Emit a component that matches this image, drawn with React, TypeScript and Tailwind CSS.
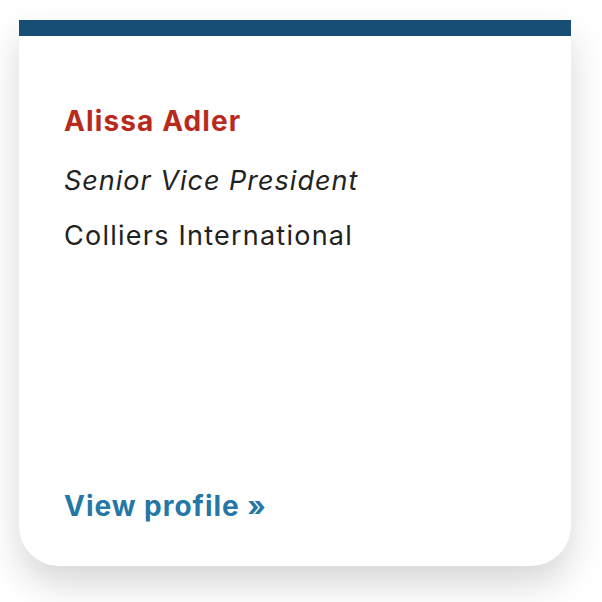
export default function App() {
  return (
    <div className="min-h-[602px] w-[602px] bg-white pl-[19px] pt-[20px] font-['Inter',sans-serif]">
      <div className="flex h-[546px] w-[552px] flex-col overflow-hidden rounded-b-[40px] border-t-[16px] border-[#174e75] bg-white shadow-[0_18px_36px_rgba(0,0,0,0.16)]">
        <div className="flex flex-1 flex-col px-[45px] pt-[67px] pb-[42px]">
          <h2 className="text-[28px] font-bold leading-[36px] tracking-[0.04em] text-[#b82a1e]">Alissa Adler</h2>
          <p className="mt-[24px] text-[27px] italic leading-[36px] tracking-[0.037em] text-[#222]">
            Senior Vice President
          </p>
          <p className="mt-[19px] text-[27px] leading-[36px] tracking-[0.046em] text-[#222]">Colliers International</p>
          <a href="#" className="mt-auto text-[28px] font-bold leading-[36px] tracking-[0.035em] text-[#2578a6]">
            View profile »
          </a>
        </div>
      </div>
    </div>
  );
}
